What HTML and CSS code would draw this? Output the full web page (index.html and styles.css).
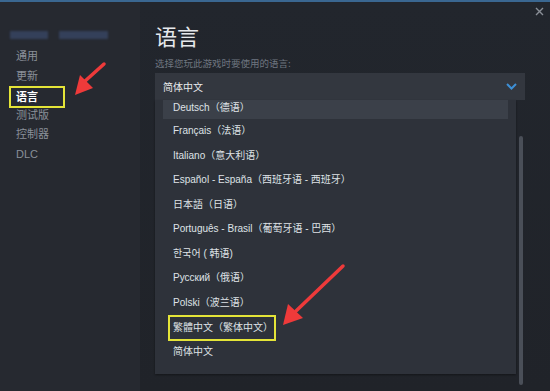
FILE: index.html
```html
<!DOCTYPE html>
<html lang="zh">
<head>
<meta charset="utf-8">
<link rel="stylesheet" href="styles.css">
</head>
<body>
<div class="topline"></div>
<div class="app">
  <aside class="sidebar">
    <div class="blur-title"><span class="bar b1"></span><span class="bar b2"></span></div>
    <ul class="nav">
      <li>通用</li>
      <li>更新</li>
      <li class="active"><span class="hl">语言</span></li>
      <li>测试版</li>
      <li>控制器</li>
      <li>DLC</li>
    </ul>
  </aside>
  <main class="main">
    <div class="close">
      <svg width="9" height="9" viewBox="0 0 9 9"><path d="M1 1L8 8M8 1L1 8" stroke="#8a8f97" stroke-width="1.4"/></svg>
    </div>
    <h1 class="title">语言</h1>
    <p class="sub">选择您玩此游戏时要使用的语言:</p>
    <div class="select">
      <span>简体中文</span>
      <svg width="11" height="7" viewBox="0 0 11 7"><path d="M1 1L5.5 5.5L10 1" stroke="#3d8fd6" stroke-width="2" fill="none"/></svg>
    </div>
    <div class="listrow">
      <ul class="list">
        <li class="first">Deutsch（德语）</li>
        <li>Français（法语）</li>
        <li>Italiano（意大利语）</li>
        <li>Español - España（西班牙语 - 西班牙）</li>
        <li>日本語（日语）</li>
        <li>Português - Brasil（葡萄牙语 - 巴西）</li>
        <li>한국어 ( 韩语)</li>
        <li>Русский（俄语）</li>
        <li>Polski（波兰语）</li>
        <li><span class="hl2">繁體中文（繁体中文）</span></li>
        <li>简体中文</li>
      </ul>
      <div class="scroll"></div>
    </div>
  </main>
</div>
<svg class="arrows" width="550" height="391" viewBox="0 0 550 391">
  <path d="M104 64 L84 82" stroke="#ee3a3a" stroke-width="3.5" stroke-linecap="round"/>
  <path d="M75 95 L80 75 L93 88 Z" fill="#ee3a3a"/>
  <path d="M343 266 L296 311" stroke="#ee3a3a" stroke-width="3.5" stroke-linecap="round"/>
  <path d="M283 325 L288 304 L303 318 Z" fill="#ee3a3a"/>
</svg>
</body>
</html>
```
FILE: styles.css
```css
* { box-sizing: border-box; }
html, body { margin: 0; padding: 0; }
body {
  width: 550px;
  height: 391px;
  overflow: hidden;
  background: #22252c;
  font-family: "Liberation Sans", "Noto Sans CJK SC", sans-serif;
  position: relative;
}
.topline { height: 2px; background: #3a6791; }
.app { display: flex; height: 389px; }
.sidebar {
  width: 140px;
  background: #262930;
  padding-top: 29px;
}
.blur-title { display: flex; gap: 11px; padding-left: 10px; height: 8px; }
.bar { display: block; height: 8px; background: #34405a; filter: blur(1.2px); }
.b1 { width: 38px; }
.b2 { width: 49px; }
.nav { list-style: none; margin: 0; padding: 8px 0 0 16px; }
.nav li {
  height: 19.6px;
  line-height: 19.6px;
  font-size: 11px;
  color: #8a9099;
  font-family: "Liberation Sans", "Noto Sans CJK SC", sans-serif;
}
.nav li.active { color: #ffffff; font-weight: bold; }
.hl {
  display: inline-block;
  margin-left: -7px;
  width: 56px;
  height: 22px;
  line-height: 18px;
  padding-left: 5px;
  border: 2px solid #e4e438;
}
.main {
  flex: 1;
  position: relative;
  padding: 16px 25px 0 15px;
  background: linear-gradient(180deg, #22262d 0%, #202329 100%);
}
.close { position: absolute; top: 5px; right: 6px; width: 9px; height: 9px; line-height: 0; }
.title {
  margin: 0;
  font-family: "Noto Sans CJK SC", sans-serif;
  font-weight: normal;
  font-size: 22px;
  line-height: 34px;
  color: #e6e9ec;
}
.sub {
  margin: 4px 0 0;
  font-family: "Noto Sans CJK SC", sans-serif;
  font-size: 9.5px;
  line-height: 14px;
  color: #6f7680;
}
.select {
  margin-top: 3px;
  height: 27px;
  background: #33373f;
  display: flex;
  align-items: center;
  justify-content: space-between;
  padding: 0 8px 0 8px;
  font-family: "Noto Sans CJK SC", sans-serif;
  font-size: 10px;
  color: #e8eaec;
}
.listrow { display: flex; gap: 3px; }
.list {
  list-style: none;
  margin: 0;
  padding: 0 8px 8px;
  width: 361px;
  height: 274px;
  overflow: hidden;
  background: #2e323a;
  box-shadow: 0 1px 2px rgba(0,0,0,0.4);
}
.list li {
  height: 24.5px;
  line-height: 24.5px;
  padding-left: 10px;
  font-size: 10px;
  color: #dfe2e6;
  white-space: nowrap;
}
.list li.first {
  height: 19px;
  line-height: 16px;
  background: #3b4049;
}
.hl2 {
  display: inline-block;
  margin-left: -5px;
  padding: 0 1px 0 3px;
  height: 26px;
  line-height: 22px;
  border: 2px solid #e4e438;
}
.scroll {
  width: 4px;
  margin-top: 36px;
  height: 249px;
  border-radius: 2px;
  background: #4a4f58;
}
.arrows { position: absolute; left: 0; top: 0; pointer-events: none; }
```
